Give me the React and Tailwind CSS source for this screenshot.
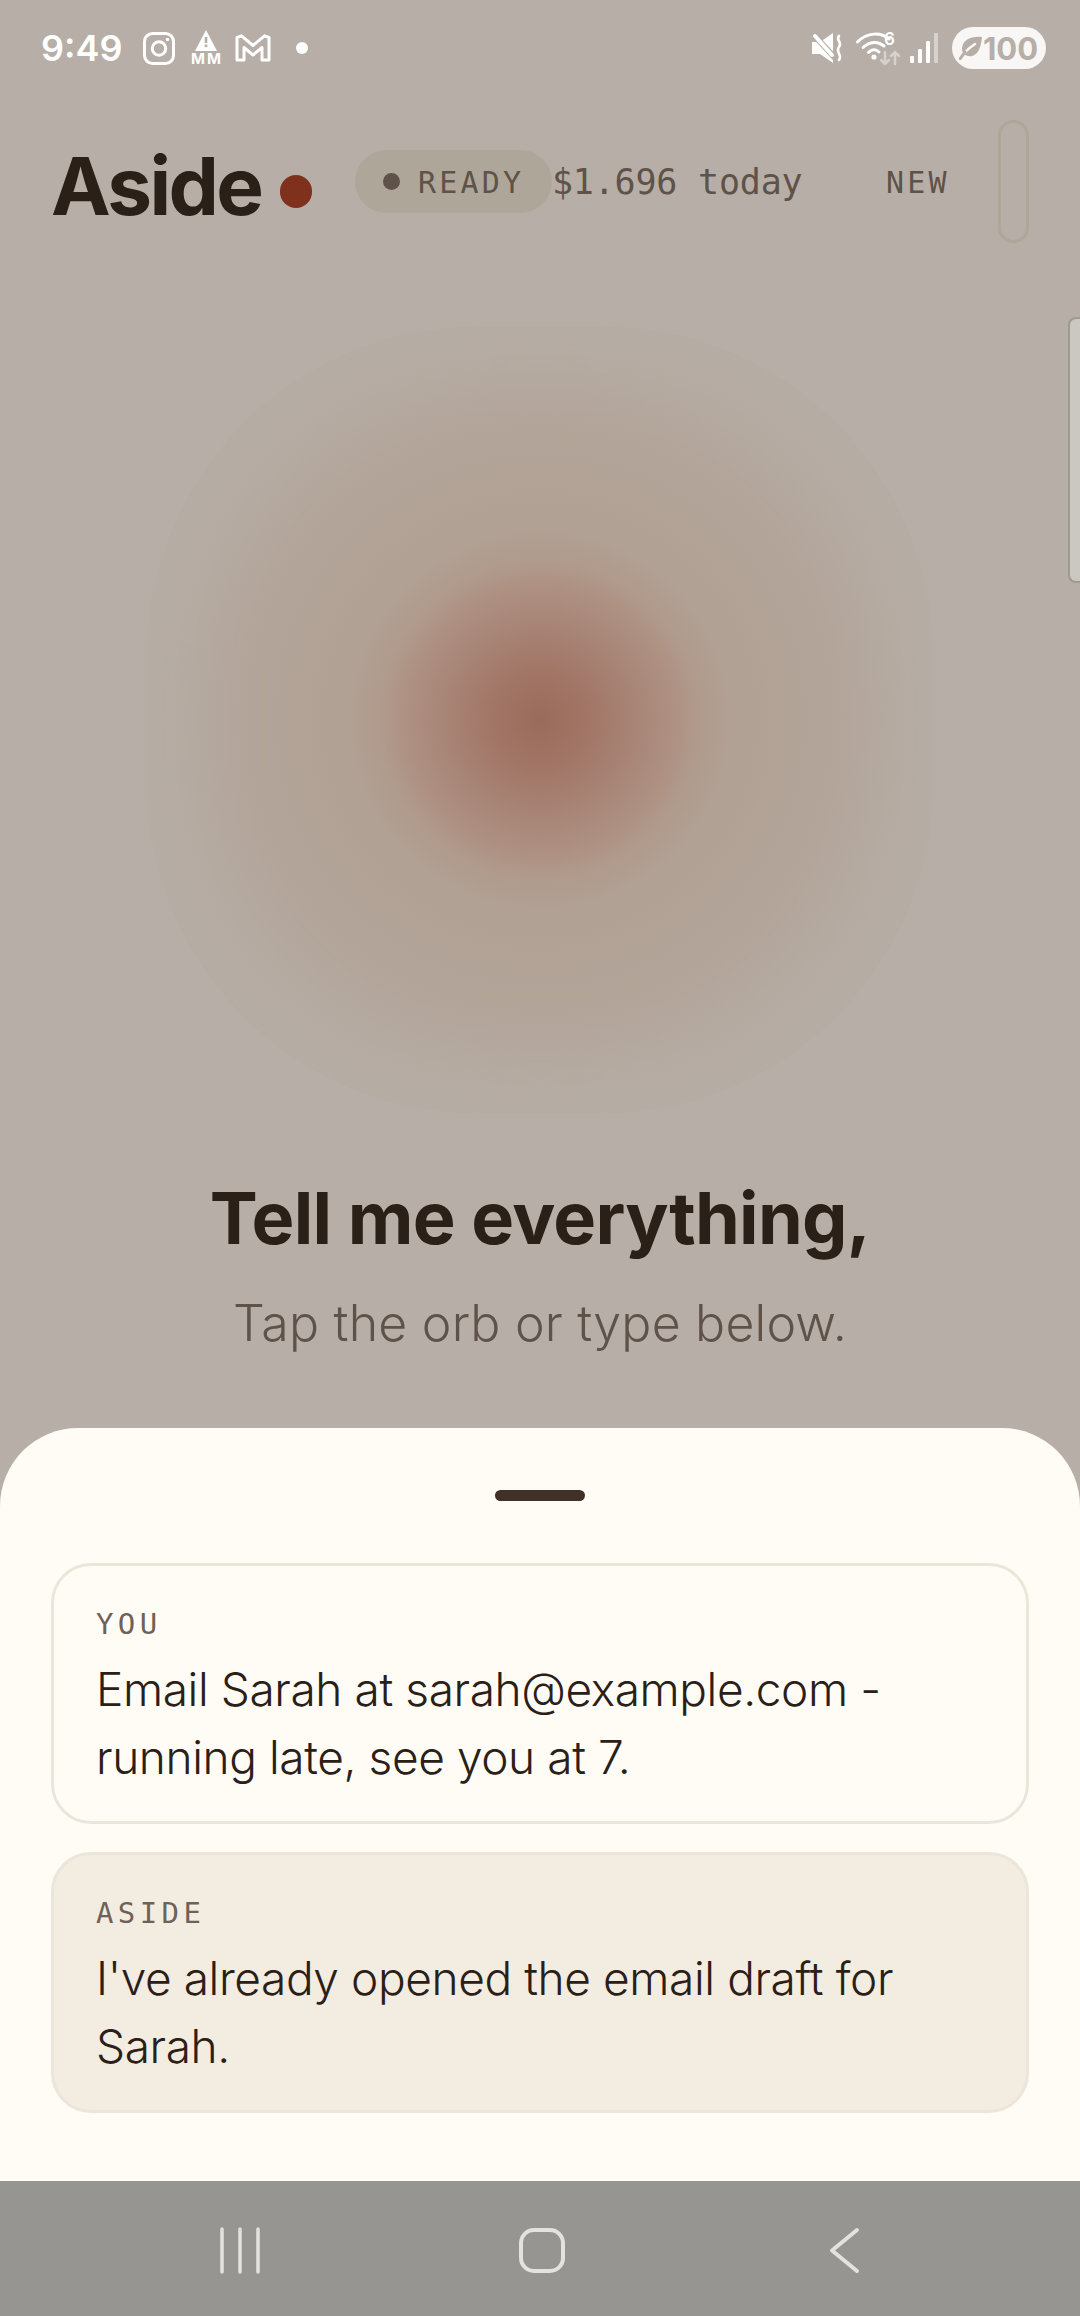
import React from "react";

function StatusBar() {
  return (
    <div className="h-[96px] flex items-center pl-[41px] pr-[34px] text-white">
      <span className="font-['Inter',sans-serif] text-[36px] leading-none font-semibold w-[102px]">9:49</span>
      <svg width="32" height="33" viewBox="0 0 32 33" fill="none" stroke="white" strokeWidth="3">
        <rect x="1.5" y="1.5" width="29" height="30" rx="8" />
        <circle cx="16" cy="16.5" r="6.7" />
        <circle cx="24.5" cy="7.5" r="1.8" fill="white" stroke="none" />
      </svg>
      <div className="ml-[15px] w-[32px] h-[36px] flex flex-col items-center">
        <svg width="22" height="21" viewBox="0 0 22 21">
          <path d="M11 0L22 21H0Z" fill="white" />
          <rect x="9.700" y="7" width="2.600" height="6" fill="#b6aea7" />
          <rect x="9.700" y="14.500" width="2.600" height="2.600" fill="#b6aea7" />
        </svg>
        <span className="font-['Inter',sans-serif] text-[15px] leading-[15px] font-bold tracking-[2px] ml-[2px]">MM</span>
      </div>
      <svg className="ml-[13px]" width="36" height="28" viewBox="0 0 36 28" fill="none" stroke="white" strokeWidth="3" strokeLinejoin="round">
        <path d="M2 3.5V26H9V13.5L18 21L27 13.5V26H34V3.5L29.5 1.8L18 11.5L6.5 1.8Z" />
      </svg>
      <div className="ml-[25px] w-[12px] h-[12px] rounded-full bg-white" />
      <div className="flex-1" />
      <svg width="32" height="30" viewBox="0 0 32 30">
        <path d="M0 9H8L21 0V30L8 21H0Z" fill="white" />
        <path d="M1 1L24 26" stroke="#b6aea7" strokeWidth="6" />
        <path d="M3 3L20 22" stroke="white" strokeWidth="4" strokeLinecap="round" />
        <path d="M27 3C23 7 31 9 27 14C23 19 31 22 27 27" stroke="white" strokeWidth="2.600" fill="none" strokeLinecap="round" />
      </svg>
      <div className="relative ml-[12px] w-[44px] h-[34px]">
        <svg width="44" height="36" viewBox="0 0 44 36" fill="none" strokeLinecap="round">
          <path d="M1.5 11C11 1 25 1 33 8" stroke="white" strokeWidth="3" />
          <path d="M7 16.500C14 10 22 10 28 15" stroke="white" strokeWidth="3" />
          <path d="M12.500 21.500C16 18 20 18 23 21" stroke="white" strokeWidth="3" />
          <circle cx="18" cy="26" r="2.600" fill="white" />
          <path d="M29 21V33M25 29L29 33L33 29" stroke="#d5d2cd" strokeWidth="2.500" />
          <path d="M39 33V21M35 25L39 21L43 25" stroke="#d5d2cd" strokeWidth="2.500" />
        </svg>
        <span className="absolute left-[28px] top-[-1px] font-['Inter',sans-serif] text-[17px] leading-[18px] font-semibold">6</span>
      </div>
      <svg className="ml-[10px]" width="28" height="30" viewBox="0 0 28 30">
        <rect x="0" y="23" width="4" height="7" rx="1" fill="white" />
        <rect x="8" y="16" width="4" height="14" rx="1" fill="white" />
        <rect x="16" y="8" width="4" height="22" rx="1" fill="white" />
        <rect x="24" y="0" width="4" height="30" rx="1" fill="#d5d2cd" />
      </svg>
      <div className="ml-[14px] w-[94px] h-[42px] rounded-full bg-[#f8f7f6] flex items-center pl-[7px] text-[#b6aea7]">
        <svg width="24" height="24" viewBox="0 0 24 24" fill="none" strokeLinecap="round">
          <path d="M23 1C13 0 4 3 3 12C2.500 18 8 21 13 20C20 18 22 10 23 1Z" fill="#b6aea7" />
          <path d="M1 23C5 16 10 12 16 8" stroke="#f8f7f6" strokeWidth="2.500" />
          <path d="M1 23L6 16" stroke="#b6aea7" strokeWidth="3" />
        </svg>
        <span className="font-['Inter',sans-serif] text-[31px] leading-none font-bold">100</span>
      </div>
    </div>
  );
}

function Card({ label, text, tone }) {
  return (
    <div className={`h-[261px] rounded-[40px] border-[3px] border-[#ece6da] pt-[42px] pl-[42px] pr-[40px] ${tone}`}>
      <div className="font-['DejaVu_Sans_Mono',monospace] text-[29px] leading-[32px] tracking-[4.4px] text-[#6d6259]">{label}</div>
      <p className="font-['Inter',sans-serif] mt-[15px] text-[46px] leading-[68px] font-light tracking-[-0.4px] text-[#2a2018]">{text}</p>
    </div>
  );
}

export default function App() {
  return (
    <div className="relative w-[1080px] h-[2316px] overflow-hidden bg-[#b6aea7] flex flex-col">
      <StatusBar />
      <div className="mt-[24px] h-[123px] pl-[51px] pr-[51px] flex items-center">
        <div className="flex items-center w-[304px]">
          <span className="font-['Inter',sans-serif] mt-[8px] text-[80px] leading-none font-bold tracking-[-2.6px] text-[#2a2018]">Aside</span>
          <span className="ml-[19px] mt-[20px] w-[32px] h-[33px] rounded-full bg-[#7f311e]" />
        </div>
        <div className="w-[197px] h-[63px] rounded-full bg-[#aea799] flex items-center pl-[28px] text-[#5f5249]">
          <span className="w-[17px] h-[17px] rounded-full bg-[#5f5249]" />
          <span className="font-['DejaVu_Sans_Mono',monospace] mt-[3px] ml-[18px] text-[30px] leading-none tracking-[3.2px]">READY</span>
        </div>
        <span className="font-['DejaVu_Sans_Mono',monospace] mt-[2px] text-[35px] leading-none tracking-[-0.2px] text-[#5f5249] w-[334px]">$1.696 today</span>
        <span className="font-['DejaVu_Sans_Mono',monospace] mt-[2px] text-[30px] leading-none tracking-[3.2px] text-[#5f5249]">NEW</span>
        <div className="ml-auto w-[31px] h-[123px] rounded-full border-[3px] border-[#aea799]" />
      </div>

      <div className="mt-[84px] self-center w-[786px] h-[786px] rounded-[330px] shadow-[inset_0_0_110px_#b6aea7] bg-[radial-gradient(circle_at_center,#9a6b5b_0px,#a27667_50px,#a88678_100px,#ae9183_135px,#b09b8d_160px,#b1a094_190px,#b3a59a_300px,#b5aba1_370px,#b5aca2_500px)]" />

      <h1 className="font-['Inter',sans-serif] mt-[63px] text-center text-[72px] leading-[84px] font-bold tracking-[-0.7px] text-[#2a2018]">Tell me everything,</h1>
      <p className="font-['Inter',sans-serif] mt-[33px] text-center text-[50px] leading-[60px] font-light tracking-[0.2px] text-[#5f5249]">Tap the orb or type below.</p>

      <div className="absolute right-0 top-[317px] w-[12px] h-[266px] rounded-l-[8px] border-2 border-r-0 border-[#9d9a95] bg-[#cbc8c2]" />

      <div className="mt-auto h-[753px] rounded-t-[78px] bg-[#fffcf5] pt-[62px] px-[51px]">
        <div className="mx-auto w-[90px] h-[11px] rounded-full bg-[#3f3128]" />
        <div className="mt-[62px] flex flex-col gap-[28px]">
          <Card label="YOU" text="Email Sarah at sarah@example.com - running late, see you at 7." tone="bg-[#fffcf5]" />
          <Card label="ASIDE" text="I've already opened the email draft for Sarah." tone="bg-[#f3ece1]" />
        </div>
      </div>

      <div className="h-[135px] bg-[#969591] flex items-start pt-[46px]">
        <svg className="ml-[218px]" width="44" height="47" viewBox="0 0 44 47" fill="none" stroke="#e3e2df" strokeWidth="3.500" strokeLinecap="round">
          <path d="M4 2V45M22 2V45M40 2V45" />
        </svg>
        <svg className="ml-[256px]" width="48" height="47" viewBox="0 0 48 47" fill="none" stroke="#e3e2df" strokeWidth="4">
          <rect x="3" y="3" width="42" height="41" rx="13" />
        </svg>
        <svg className="ml-[262px]" width="34" height="47" viewBox="0 0 34 47" fill="none" stroke="#e3e2df" strokeWidth="4" strokeLinecap="round" strokeLinejoin="round">
          <path d="M29 3L4 23.500L29 44" />
        </svg>
      </div>
    </div>
  );
}
